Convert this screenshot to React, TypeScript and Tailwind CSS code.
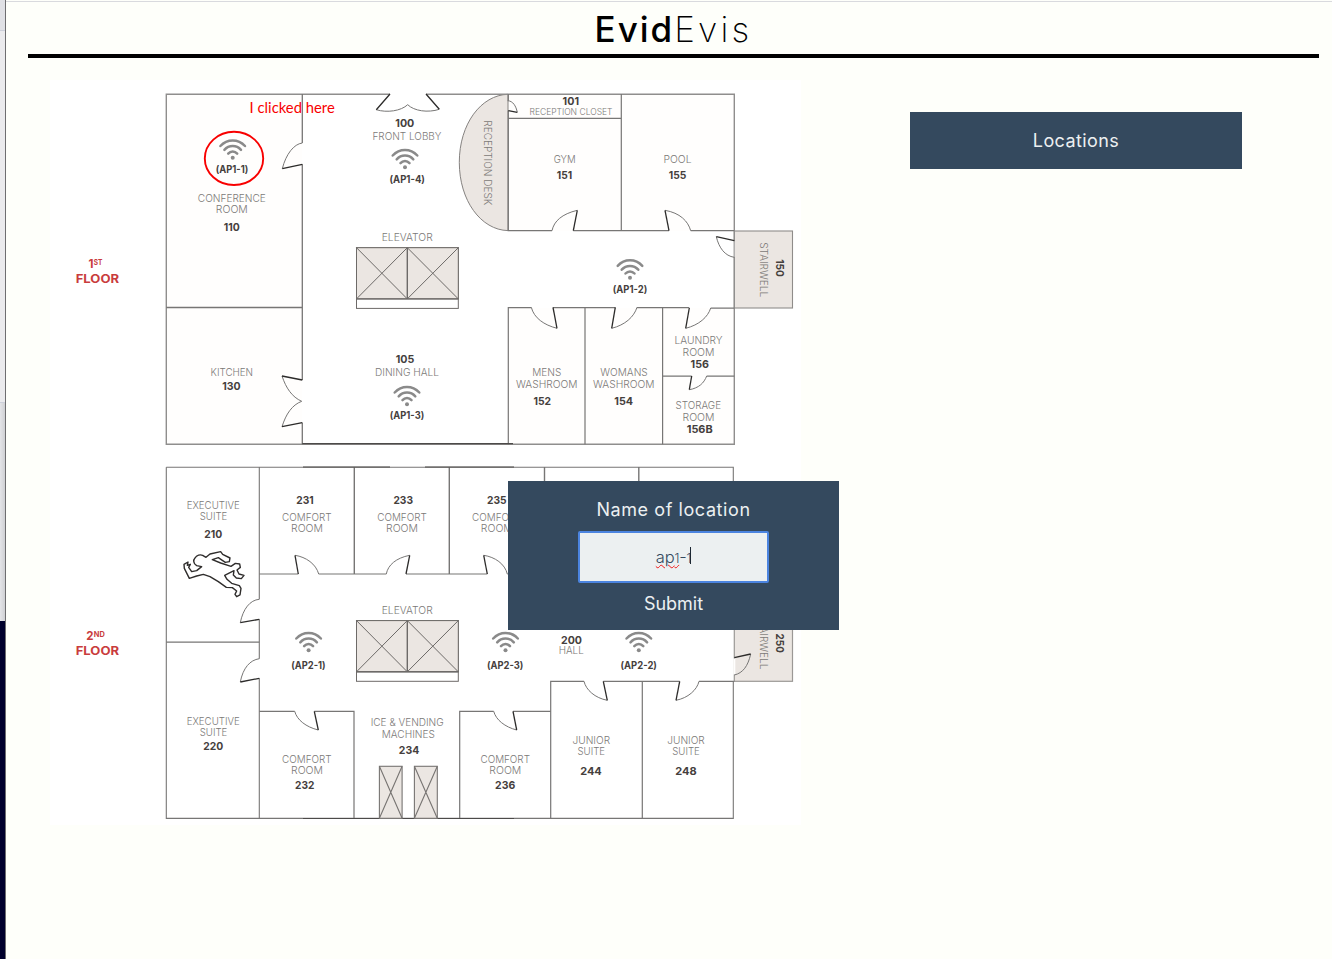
import React from "react";

type LabelProps = { x: number; y: number; w: number; t: string; size?: number };

const INTER = "Inter, sans-serif";

function Name({ x, y, w, t, size = 10.1 }: LabelProps) {
  return (
    <text x={x - w / 2} y={y} textLength={w} lengthAdjust="spacingAndGlyphs" fontFamily={INTER} fontSize={size} fontWeight={300} fill="#7b7977">
      {t}
    </text>
  );
}

function Num({ x, y, w, t, size = 11 }: LabelProps) {
  return (
    <text x={x - w / 2} y={y} textLength={w} lengthAdjust="spacingAndGlyphs" fontFamily={INTER} fontSize={size} fontWeight={700} fill="#45403d">
      {t}
    </text>
  );
}

function Wifi({ x, y }: { x: number; y: number }) {
  return (
    <g transform={`translate(${x} ${y})`} fill="none" stroke="#8a8a8a" strokeWidth={2.5} strokeLinecap="round">
      <path d="M-12.3 -11.8C-5.5 -19.2 5.5 -19.2 12.3 -11.8" />
      <path d="M-8.3 -8C-3.8 -13 3.8 -13 8.3 -8" />
      <path d="M-4.5 -4.2C-2 -7 2 -7 4.5 -4.2" />
      <circle r={2} fill="#8a8a8a" stroke="none" />
    </g>
  );
}

function Elevator({ y }: { y: number }) {
  return (
    <g transform={`translate(356.5 ${y})`} stroke="#6d6a68" strokeWidth={1}>
      <rect width={101.8} height={60.7} fill="#fff" />
      <rect width={101.8} height={51.2} fill="#ebe6e2" />
      <path d="M0 0L50.8 51.2L101.8 0M0 51.2L50.8 0L101.8 51.2" fill="none" />
      <path d="M50.8 0V51.2M0 51.2H101.8" fill="none" strokeWidth={1.4} />
    </g>
  );
}

function Vending({ x, w }: { x: number; w: number }) {
  return (
    <g transform={`translate(${x} 766.3)`} stroke="#777472" strokeWidth={1.1}>
      <rect width={w} height={52} fill="#ebe6e2" />
      <path d={`M0 0L${w} 52M0 52L${w} 0`} />
    </g>
  );
}

const doorArcs = [
  "M302.3 143C294 144 286 154 282.3 168.7",
  "M376.3 109.7C387 113 401 111 407.7 104.7C414 111 428 113 439.3 109.3",
  "M507.7 100.7C513 101 516 106 517.3 112.3",
  "M552 230.7C554 221 562 214 577.3 210.3",
  "M665 210.3C680 213 688 221 690.7 230.7",
  "M716.3 236.7C719 248 725 256 734.3 257.3",
  "M282 376C286 388 292 397 301.7 401.3C292 405 286 414 282 426.7",
  "M531.3 307.3C534 318 544 325 557 328.3",
  "M637 307.3C634 317 625 325 611.7 328.3",
  "M710.7 308C708 317 699 325 685.7 328.3",
  "M706.7 376C704 383 699 388 689.3 389.7",
  "M295 555.3C306 557 316 564 318.7 574",
  "M386.3 574C388 565 396 558 409.7 555.3",
  "M483.7 555.3C495 557 505 564 507.3 574",
  "M259.3 599.3C250 600 243 609 240.3 622.7",
  "M259.3 658.7C250 660 243 668 240.3 682",
  "M294.7 711.3C297 720 306 727 318.3 730",
  "M493.7 711.3C496 720 505 727 516.7 730",
  "M584 681.3C586 690 595 698 607.3 700.3",
  "M699 681.3C697 690 688 698 676 700.3",
  "M750.7 654C748 666 743 673 734.3 675",
];

const doorLeaves = [
  "M282.3 168.7L302.3 164.3",
  "M390 94L376.3 109.7M439.3 109.3L426 94",
  "M517.3 112.3L508.3 110.7",
  "M577.3 210.3L573.3 230.7",
  "M669 230.7L665 210.3",
  "M734.3 240.7L716.3 236.7",
  "M302.3 380L282 376M282 426.7L302.3 422.7",
  "M557 328.3L553 307.3",
  "M615.3 307.3L611.7 328.3",
  "M689.3 308L685.7 328.3",
  "M691.7 376L689.3 389.7",
  "M298.3 574L295 555.3",
  "M409.7 555.3L406 574",
  "M487.3 574L483.7 555.3",
  "M240.3 622.7L259.3 619.3",
  "M240.3 682L259.3 678.3",
  "M318.3 730L314.3 711.3",
  "M516.7 730L513 711.3",
  "M607.3 700.3L603.3 681.3",
  "M679.7 681.3L676 700.3",
  "M734.3 657.7L750.7 654",
];

const names: [number, number, number, string][] = [
  [231.8, 201.7, 68, "CONFERENCE"],
  [231.8, 213, 32, "ROOM"],
  [407, 140.3, 69, "FRONT LOBBY"],
  [407.2, 240.7, 51, "ELEVATOR"],
  [564.7, 163, 22, "GYM"],
  [677.5, 163, 28, "POOL"],
  [231.8, 376.2, 42.5, "KITCHEN"],
  [407, 376.2, 64, "DINING HALL"],
  [546.8, 376.2, 29, "MENS"],
  [546.8, 387.7, 61.5, "WASHROOM"],
  [624, 376.2, 47.5, "WOMANS"],
  [623.8, 387.7, 61.5, "WASHROOM"],
  [698.5, 344.3, 48, "LAUNDRY"],
  [698.5, 355.6, 32, "ROOM"],
  [698.3, 409.3, 45.5, "STORAGE"],
  [698.5, 420.5, 32, "ROOM"],
  [213.2, 508.7, 53, "EXECUTIVE"],
  [213.5, 520.3, 27.5, "SUITE"],
  [306.8, 520.7, 49.5, "COMFORT"],
  [307, 531.9, 32, "ROOM"],
  [402, 520.7, 49.5, "COMFORT"],
  [402, 531.9, 32, "ROOM"],
  [496.8, 520.7, 49.5, "COMFORT"],
  [496.8, 531.9, 32, "ROOM"],
  [407.2, 613.7, 51, "ELEVATOR"],
  [571.2, 653.6, 25, "HALL"],
  [213.2, 724.7, 53, "EXECUTIVE"],
  [213.5, 736, 27.5, "SUITE"],
  [306.8, 762.7, 49.5, "COMFORT"],
  [307, 774, 32, "ROOM"],
  [407.2, 726.2, 73, "ICE & VENDING"],
  [408.3, 737.5, 53, "MACHINES"],
  [505.2, 762.7, 49.5, "COMFORT"],
  [505.3, 774, 32, "ROOM"],
  [591.3, 744, 37.5, "JUNIOR"],
  [591.3, 755.2, 27.5, "SUITE"],
  [686, 744, 37.5, "JUNIOR"],
  [686, 755.2, 27.5, "SUITE"],
];

const numbers: [number, number, number, string][] = [
  [231.7, 230.7, 16, "110"],
  [404.8, 127.3, 19, "100"],
  [570.8, 105.4, 16.4, "101"],
  [564.5, 179.3, 15.4, "151"],
  [677.5, 179.3, 17.6, "155"],
  [231.5, 390, 18.4, "130"],
  [405, 362.8, 18.6, "105"],
  [542.3, 405, 17.6, "152"],
  [623.7, 405, 18.8, "154"],
  [699.8, 368, 18.4, "156"],
  [699.7, 432.5, 26, "156B"],
  [213.3, 537.8, 18, "210"],
  [305, 504, 17.4, "231"],
  [403.2, 504, 19.6, "233"],
  [496.8, 504, 19.6, "235"],
  [571.5, 643.6, 21, "200"],
  [213.3, 750.3, 20, "220"],
  [304.8, 789, 19.4, "232"],
  [409, 754.4, 20.4, "234"],
  [505.2, 789, 20.2, "236"],
  [591, 774.7, 21.6, "244"],
  [686, 774.7, 21.4, "248"],
];

const points: { x: number; y: number; lx: number; ly: number; w: number; t: string }[] = [
  { x: 232.7, y: 157.8, lx: 232, ly: 173.3, w: 32.5, t: "(AP1-1)" },
  { x: 405, y: 167.3, lx: 407.2, ly: 183, w: 35.4, t: "(AP1-4)" },
  { x: 630, y: 277.7, lx: 630, ly: 292.7, w: 34.4, t: "(AP1-2)" },
  { x: 407, y: 404.3, lx: 407, ly: 418.7, w: 34.4, t: "(AP1-3)" },
  { x: 308.6, y: 650.3, lx: 308.4, ly: 668.8, w: 34.4, t: "(AP2-1)" },
  { x: 505.5, y: 650.3, lx: 505.2, ly: 668.8, w: 36.4, t: "(AP2-3)" },
  { x: 638.8, y: 650.3, lx: 638.7, ly: 668.8, w: 36.4, t: "(AP2-2)" },
];

function FloorTitle({ y, digit, suffix }: { y: number; digit: string; suffix: string }) {
  return (
    <g fill="#c93c3d" fontFamily={INTER} fontWeight={700}>
      <text x={digit === "1" ? 88.5 : 86.3} y={y} fontSize={11.5}>{digit}</text>
      <text x={93.8} y={y - 3.7} fontSize={7.4} textLength={digit === "1" ? 8.6 : 11} lengthAdjust="spacingAndGlyphs">{suffix}</text>
      <text x={75.7} y={y + 14.8} fontSize={11.4} textLength={43.4} lengthAdjust="spacingAndGlyphs">FLOOR</text>
    </g>
  );
}

function FloorPlan() {
  return (
    <svg className="block h-[745px] w-[751px]" viewBox="50 80 751 745">
      <rect x={50} y={80} width={751} height={745} fill="#ffffff" />

      <g fill="#fffefd">
        <rect x={166.3} y={94} width={136} height={350} />
        <rect x={508.3} y={94} width={226} height={136.7} />
        <rect x={508.3} y={307.7} width={226} height={136.6} />
      </g>
      <rect x={734.3} y={231} width={58.2} height={77} fill="#ebe6e2" stroke="#8f8c8a" strokeWidth={1.1} />
      <rect x={734.3} y={604} width={58.2} height={77.3} fill="#ebe6e2" stroke="#9b9896" strokeWidth={1.2} />
      <path d="M508 94.3C481 95 459.3 124 459.3 162.3S481 230 508 230.6Z" fill="#ebe6e2" stroke="#858280" strokeWidth={1} />

      <g fill="none" stroke="#777675" strokeWidth={1.1}>
        <path d="M390 94.3H166.3V444.3H734.3V94.3H426" stroke="#8f8e8d" strokeWidth={1.4} />
        <path d="M302.3 94V143M302.3 164.3V380M302.3 422.7V444.3M166.3 307.5H302.3" strokeWidth={1.3} />
        <path d="M508.3 94V100.7M508.3 110.7V230.7H552M573.3 230.7H669M690.7 230.7H734.3M621.3 94V230.7M508.3 118.4H621.3" strokeWidth={1.2} />
        <path d="M531.3 307.6H508.3V444.3M553 307.6H615.3M637 307.6H689.3M710.7 308.1H734.3M585 307.6V444.3M662.6 307.6V444.3M662.6 376.2H691.7M706.7 376.2H734.3" strokeWidth={1.2} />
        <path d="M166.3 467.2H733.3V600M166.3 467.2V818.4H733.3V681.3M259.3 467V599.3M259.3 619.3V658.7M259.3 678.3V818.4" />
        <path d="M354.3 467V574M449.3 467V574M544.5 467V574M638.8 467V574M166.3 642.1H259.3" strokeWidth={1.4} />
        <path d="M259.3 574H298.3M318.7 574H386.3M406 574H487.3M507.3 574H733" />
        <path d="M259.3 711.4H294.7M314.3 711.4H354V818.4M493.7 711.4H459.7V818.4M513 711.4H550.7M550.7 818.4V681.4H584M603.3 681.4H679.7M699 681.4H734.3M642.3 681.4V818.4" strokeWidth={1.2} />
      </g>
      <path d="M302.3 443.7H513M303 467H390M425 467H514M303 818.5H380M402 818.5H414M437 818.5H514" fill="none" stroke="#4c4a49" strokeWidth={1.2} />
      <path d="M734 241.2V257" stroke="#fffefd" strokeWidth={0.6} />
      <path d="M734.3 658.4V674.5" stroke="#fffefd" strokeWidth={2} />

      <Elevator y={247.7} />
      <Elevator y={620.6} />
      <Vending x={379.4} w={22.7} />
      <Vending x={414.4} w={22.9} />

      <g fill="none" stroke="#777675" strokeWidth={1}>
        {doorArcs.map((d) => <path key={d} d={d} />)}
      </g>
      <g fill="none" stroke="#2c2b2a" strokeWidth={1.3}>
        {doorLeaves.map((d) => <path key={d} d={d} />)}
      </g>

      <path
        transform="translate(150 460) scale(.33333)"
        d="M140 317C130 311 129 300 135 294C140 285 151 283 158 286L168 292L180 282L212 275L218 283L240 294L238 305L226 307L217 301L205 293L187 299L212 309L243 319L256 310L269 312L271 322L261 330L267 342L282 346L274 356L259 354L250 345L252 332L224 346L231 358L245 370L268 377L273 385L270 405L260 410L255 403L260 393L247 383L229 382L205 365L180 350L160 343L140 348L118 355L103 325L102 313L114 306L112 316L121 313L116 322L125 335L140 332L155 320Z"
        fill="#ffffff"
        stroke="#2f2d2c"
        strokeWidth={4.2}
        strokeLinejoin="round"
      />

      {names.map(([x, y, w, t]) => <Name key={`${x}-${y}`} x={x} y={y} w={w} t={t} />)}
      <Name x={571} y={115} w={83} t="RECEPTION CLOSET" size={8.8} />
      {numbers.map(([x, y, w, t]) => <Num key={t} x={x} y={y} w={w} t={t} />)}
      {points.map((p) => (
        <g key={p.t}>
          <Wifi x={p.x} y={p.y} />
          <Num x={p.lx} y={p.ly} w={p.w} t={p.t} size={9.8} />
        </g>
      ))}

      <g transform="translate(484 162.8) rotate(90)"><Name x={0} y={0} w={85} t="RECEPTION DESK" /></g>
      <g transform="translate(759.7 269.7) rotate(90)"><Name x={0} y={0} w={55} t="STAIRWELL" /></g>
      <g transform="translate(776.2 268) rotate(90)"><Num x={0} y={0} w={17.7} t="150" /></g>
      <g transform="translate(759.7 642) rotate(90)"><Name x={0} y={0} w={55} t="STAIRWELL" /></g>
      <g transform="translate(776.2 643.2) rotate(90)"><Num x={0} y={0} w={19.5} t="250" /></g>

      <FloorTitle y={268.3} digit="1" suffix="ST" />
      <FloorTitle y={640.3} digit="2" suffix="ND" />

      <ellipse cx={234} cy={158.4} rx={29.2} ry={26.6} fill="none" stroke="#f80000" strokeWidth={1.9} />
      <text x={249.6} y={112.7} textLength={85.2} lengthAdjust="spacingAndGlyphs" fontFamily="Lato, sans-serif" fontSize={14.6} fill="#f80000">
        I clicked here
      </text>
    </svg>
  );
}

function LocationDialog() {
  return (
    <div className="absolute left-[458px] top-[401px] flex h-[149px] w-[331px] flex-col items-center bg-[#34495e] text-[18px] leading-[24px] text-[#ecf0f1]">
      <div className="mt-[17px] tracking-[0.58px]">Name of location</div>
      <div className="mt-[9px] flex h-[52px] w-[191px] items-center justify-center rounded-[2px] border-2 border-[#4b84e0] bg-[#ecf0f1] font-light text-[#34495e]">
        <span className="relative mt-[2px] flex items-baseline text-[16.5px] tracking-[-0.2px]">
          <span className="underline decoration-[#f01818] decoration-wavy decoration-1 underline-offset-1">
            ap<span className="text-[12.5px]">1</span>
          </span>
          <span>-</span>
          <span className="text-[12.5px]">1</span>
          <span className="absolute right-0 top-[2px] h-[17px] w-px bg-[#1c2733]" />
        </span>
      </div>
      <div className="mt-[9px]">Submit</div>
    </div>
  );
}

export default function App() {
  return (
    <div className="flex h-[959px] w-[1332px] overflow-hidden bg-[#fefffa] font-['Inter',sans-serif]">
      <div className="flex w-[5px] flex-col">
        <div className="h-[30px] bg-[#e0e1e5]" />
        <div className="h-[372px] border-t border-[#cdd0da] bg-[#ebebed]" />
        <div className="h-[219px] border-t border-[#cdd0da] bg-gradient-to-r from-[#e4e5e8] to-[#d0d1d4]" />
        <div className="flex-1 bg-[#00002c]" />
      </div>
      <div className="w-px bg-[#6e6e70]" />
      <div className="flex flex-1 flex-col">
        <div className="mt-px h-px bg-[#d9dade]" />
        <header className="ml-[22px] mr-[13px] flex h-[56px] items-center justify-center border-b-4 border-black pt-[2px] text-[35px] leading-none text-black">
          <span className="font-medium tracking-[2px]">Evid</span>
          <span className="font-extralight tracking-[3.2px]">Evis</span>
        </header>
        <main className="ml-[44px] mt-[22px] flex items-start">
          <section className="relative">
            <FloorPlan />
            <LocationDialog />
          </section>
          <aside className="ml-[109px] mt-[32px] flex h-[57px] w-[332px] items-center justify-center bg-[#34495e] text-[18px] tracking-[0.4px] text-[#ecf0f1]">
            Locations
          </aside>
        </main>
      </div>
    </div>
  );
}
